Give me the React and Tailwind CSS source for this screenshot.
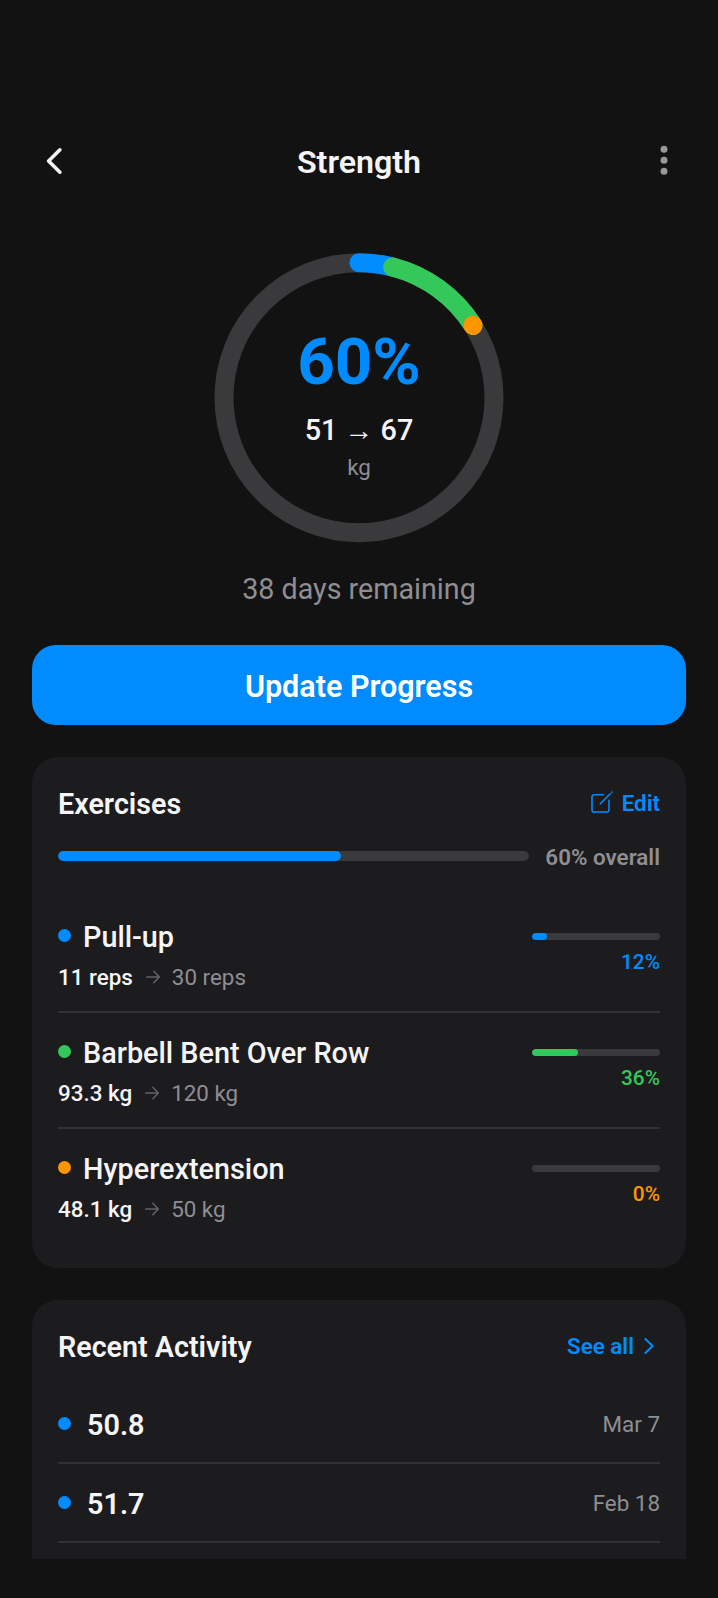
import React from "react";

const RADIUS = 135;
const CIRC = 2 * Math.PI * RADIUS;

function Arc({ from, length, color }) {
  return (
    <circle
      cx="145"
      cy="144.7"
      r={RADIUS}
      fill="none"
      stroke={color}
      strokeWidth="19"
      strokeLinecap="round"
      strokeDasharray={`${Math.max(length * CIRC, 0.01)} ${CIRC}`}
      transform={`rotate(${from * 360 - 90} 145 144.7)`}
    />
  );
}

function ProgressRing() {
  return (
    <div className="mx-auto grid size-[290px]">
      <svg className="col-start-1 row-start-1 size-[290px]" viewBox="0 0 290 290">
        <circle cx="145" cy="144.7" r={RADIUS} fill="none" stroke="#3a3a3c" strokeWidth="19" />
        <Arc from={0} length={0.04} color="#008cff" />
        <Arc from={0.04} length={0.12} color="#34c759" />
        <Arc from={0.16} length={0} color="#ff9500" />
      </svg>
      <div className="col-start-1 row-start-1 flex flex-col items-center pt-[71px]">
        <div className="text-[65.5px] leading-[76px] font-bold text-[#008cff]">60%</div>
        <div className="mt-[13px] text-[28.8px] leading-[34px] font-medium text-[#f5f5f7]">51 → 67</div>
        <div className="mt-[3px] text-[22.4px] leading-[34px] text-[#8e8e93]">kg</div>
      </div>
    </div>
  );
}

const exercises = [
  { name: "Pull-up", now: "11 reps", goal: "30 reps", pct: 12, dot: "bg-[#008cff]", text: "text-[#008cff]" },
  { name: "Barbell Bent Over Row", now: "93.3 kg", goal: "120 kg", pct: 36, dot: "bg-[#34c759]", text: "text-[#34c759]" },
  { name: "Hyperextension", now: "48.1 kg", goal: "50 kg", pct: 0, dot: "bg-[#ff9500]", text: "text-[#ff9500]" },
];

const activity = [
  { value: "50.8", date: "Mar 7" },
  { value: "51.7", date: "Feb 18" },
];

function SmallArrow() {
  return (
    <svg className="mr-[11px] mb-0.5 ml-3 size-4 text-[#636366]" viewBox="0 0 16 16" fill="none" stroke="currentColor" strokeWidth="1.5" strokeLinecap="round" strokeLinejoin="round">
      <path d="M1.7 8H14.3M8.8 2.2L14.3 8L8.8 13.8" />
    </svg>
  );
}

function Exercise({ item, last }) {
  return (
    <div className={"flex h-[116px] justify-between " + (last ? "" : "border-b-2 border-[#323234]")}>
      <div className="pt-[23px]">
        <div className="flex h-9 items-center">
          <span className={"mb-1.5 size-[13px] rounded-full " + item.dot} />
          <span className="ml-3 text-[28.8px] font-medium text-[#f5f5f7]">{item.name}</span>
        </div>
        <div className="mt-2 flex h-7 items-center text-[22.4px]">
          <span className="font-medium text-[#f5f5f7]">{item.now}</span>
          <SmallArrow />
          <span className="text-[#8e8e93]">{item.goal}</span>
        </div>
      </div>
      <div className="flex w-[128px] flex-col items-end pt-[36px]">
        <div className="h-[7px] w-full overflow-hidden rounded-full bg-[#3a3a3c]">
          <div className={"h-full rounded-full " + item.dot} style={{ width: `${item.pct}%` }} />
        </div>
        <div className={"mt-[9px] text-[20.8px] leading-[26px] font-medium " + item.text}>{item.pct}%</div>
      </div>
    </div>
  );
}

export default function App() {
  return (
    <div className="flex h-[1598px] w-[718px] flex-col overflow-hidden bg-[#121212] px-8 pt-[128px] font-[Roboto,sans-serif]">
      <header className="grid h-[68px] shrink-0 grid-cols-[1fr_auto_1fr] items-center">
        <svg className="mb-0.5 ml-3 h-7 w-5" viewBox="0 0 20 28" fill="none" stroke="#f5f5f7" strokeWidth="3.6" strokeLinecap="round" strokeLinejoin="round">
          <path d="M15.9 2.8L4.6 14L15.9 25.2" />
        </svg>
        <h1 className="text-[32.2px] leading-[40px] font-semibold text-[#f5f5f7]">Strength</h1>
        <svg className="mr-[18.5px] mb-1 h-8 w-2 justify-self-end" viewBox="0 0 8 32" fill="#98989a">
          <circle cx="4" cy="5.3" r="3.5" />
          <circle cx="4" cy="16.3" r="3.5" />
          <circle cx="4" cy="27.3" r="3.5" />
        </svg>
      </header>

      <div className="mt-[57px] shrink-0">
        <ProgressRing />
      </div>
      <p className="mt-7 shrink-0 text-center text-[28.7px] leading-[36px] text-[#8e8e93]">38 days remaining</p>

      <button className="mt-[38px] flex h-[80px] w-[654px] shrink-0 items-center justify-center rounded-3xl bg-[#008cff] pt-1 text-[30.5px] font-semibold text-white">
        Update Progress
      </button>

      <section className="mt-8 h-[511px] w-[654px] shrink-0 rounded-[26px] bg-[#1c1c1e] px-[26px] pt-[27px]">
        <div className="flex h-10 items-center justify-between">
          <h2 className="pt-0.5 text-[28.7px] font-semibold text-[#f5f5f7]">Exercises</h2>
          <div className="flex items-center text-[22.4px] font-semibold text-[#008cff]">
            <svg className="mr-[9px] mb-[3px] size-[22px]" viewBox="0 0 22 22" fill="none" stroke="currentColor" strokeWidth="1.6" strokeLinecap="round" strokeLinejoin="round">
              <path d="M12.5 3.7H3.3Q1 3.7 1 6V18.7Q1 21 3.3 21H15.7Q18 21 18 18.7V9.3M9.3 12.8L19.3 2.8M20.9 1.2L21.1 1" />
            </svg>
            Edit
          </div>
        </div>
        <div className="mt-[19px] flex h-[28px] items-center justify-between">
          <div className="mb-0.5 h-[10px] w-[471px] overflow-hidden rounded-full bg-[#3a3a3c]">
            <div className="h-full w-[60%] rounded-full bg-[#008cff]" />
          </div>
          <span className="pt-0.5 text-[22.4px] font-semibold text-[#8e8e93]">60% overall</span>
        </div>
        <div className="mt-[26px]">
          {exercises.map((e, i) => (
            <Exercise key={e.name} item={e} last={i === exercises.length - 1} />
          ))}
        </div>
      </section>

      <section className="mt-8 h-[259px] w-[654px] shrink-0 rounded-t-[26px] bg-[#1c1c1e] px-[26px] pt-[27px]">
        <div className="flex h-10 items-center justify-between">
          <h2 className="pt-0.5 text-[28.7px] font-semibold text-[#f5f5f7]">Recent Activity</h2>
          <div className="flex items-center text-[22.4px] font-semibold text-[#008cff]">
            See all
            <svg className="mr-1.5 mb-0.5 ml-[10px] h-4 w-[10px]" viewBox="0 0 10 16" fill="none" stroke="currentColor" strokeWidth="2" strokeLinecap="round" strokeLinejoin="round">
              <path d="M1.4 1L8.6 8L1.4 15" />
            </svg>
          </div>
        </div>
        <div className="mt-[18px]">
          {activity.map((a) => (
            <div key={a.value} className="flex h-[79px] items-center border-b-2 border-[#323234] pt-0.5">
              <span className="mb-0.5 size-[13px] rounded-full bg-[#008cff]" />
              <span className="ml-4 pt-0.5 text-[28.8px] font-semibold text-[#f5f5f7]">{a.value}</span>
              <span className="ml-auto text-[22.4px] text-[#8e8e93]">{a.date}</span>
            </div>
          ))}
        </div>
      </section>
    </div>
  );
}
